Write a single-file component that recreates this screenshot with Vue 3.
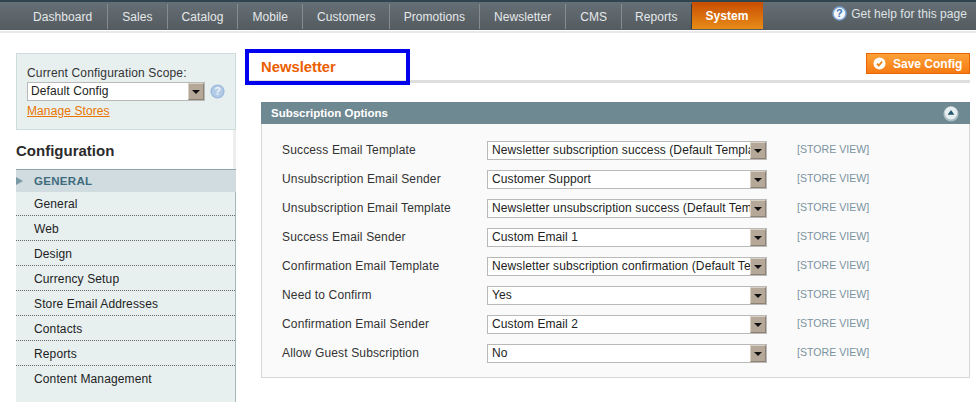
<script setup>
const nav = ['Dashboard','Sales','Catalog','Mobile','Customers','Promotions','Newsletter','CMS','Reports'];
const menu = ['General','Web','Design','Currency Setup','Store Email Addresses','Contacts','Reports','Content Management'];
const rows = [
  ['Success Email Template','Newsletter subscription success (Default Templa'],
  ['Unsubscription Email Sender','Customer Support'],
  ['Unsubscription Email Template','Newsletter unsubscription success (Default Tem'],
  ['Success Email Sender','Custom Email 1'],
  ['Confirmation Email Template','Newsletter subscription confirmation (Default Te'],
  ['Need to Confirm','Yes'],
  ['Confirmation Email Sender','Custom Email 2'],
  ['Allow Guest Subscription','No'],
];
</script>

<template>
  <div class="page">
    <header class="nav">
      <ul class="tabs">
        <li v-for="n in nav" :key="n" class="tab">{{ n }}</li>
        <li class="tab active">System</li>
      </ul>
      <div class="help">
        <svg width="15" height="15" viewBox="0 0 15 15"><circle cx="7.5" cy="7.5" r="6.4" fill="#f4f8fc" stroke="#82aad8" stroke-width="1.5"/><text x="7.5" y="11.4" text-anchor="middle" class="q">?</text></svg>
        <span>Get help for this page</span>
      </div>
    </header>
    <div class="strip"></div>
    <div class="body">
      <aside class="side">
        <div class="scope">
          <div class="scope-label">Current Configuration Scope:</div>
          <div class="scope-row">
            <div class="select scope-select">
              <span class="val">Default Config</span>
              <span class="arrow"><i></i></span>
            </div>
            <svg class="qm" width="15" height="15" viewBox="0 0 15 15"><circle cx="7.5" cy="7.5" r="6.4" fill="#b4cbe6" stroke="#9dbbdf" stroke-width="1.4"/><text x="7.5" y="11.4" text-anchor="middle" class="q2">?</text></svg>
          </div>
          <a class="manage">Manage Stores</a>
        </div>
        <h3 class="conf">Configuration</h3>
        <div class="menu">
          <div class="group"><span class="tri"></span>GENERAL</div>
          <div v-for="(m,i) in menu" :key="m" class="item" :class="{ first: i === 0, last: i === menu.length - 1 }">{{ m }}</div>
        </div>
      </aside>
      <main class="main">
        <div class="head">
          <h3 class="title">Newsletter</h3>
          <button class="save">
            <svg width="13" height="13" viewBox="0 0 14 14"><circle cx="7" cy="7" r="6.5" fill="#fff"/><path d="M4.2 7.2l2 2 3.6-4.2" fill="none" stroke="#f07f12" stroke-width="1.8"/></svg>
            <span>Save Config</span>
          </button>
          <div class="outline"></div>
        </div>
        <section class="section">
          <div class="sec-head">
            <span>Subscription Options</span>
            <svg width="16" height="17" viewBox="0 0 16 17"><circle cx="8" cy="8.8" r="7.6" fill="#a9bcc2"/><circle cx="8" cy="8" r="6.4" fill="#e6eef0"/><path d="M8 5l3.4 4.8H4.6z" fill="#23566e"/></svg>
          </div>
          <div class="fields">
            <div v-for="r in rows" :key="r[0]" class="row">
              <label class="lab">{{ r[0] }}</label>
              <div class="select">
                <span class="val">{{ r[1] }}</span>
                <span class="arrow"><i></i></span>
              </div>
              <span class="sv">[STORE VIEW]</span>
            </div>
          </div>
        </section>
      </main>
    </div>
  </div>
</template>

<style>
html, body { margin: 0; overflow: hidden; background: #fff; }
</style>

<style scoped>
.page { width: 976px; height: 402px; overflow: hidden; font: 12px "Liberation Sans", Arial, sans-serif; color: #2f2f2f; background: #fff; }
.nav { height: 28px; border-top: 2px solid #2e4550; background: linear-gradient(#666f75, #535b60); display: flex; justify-content: space-between; }
.tabs { list-style: none; margin: 0; padding: 0 0 0 19px; display: flex; height: 27px; }
.tab { padding: 0 14px; color: #e6e9ea; font-size: 12px; border-right: 1px solid #858c90; letter-spacing: .06px; height: 25px; margin-top: 2px; line-height: 27px; }
.tab:first-child { padding-right: 15px; }
.tab:nth-child(5) { padding-right: 13px; }
.tab:nth-child(9) { border-right: 1px solid #2e3a40; padding-right: 13px; padding-left: 13px; }
.tab.active { border: 0; margin-top: 0; height: 27px; line-height: 29px; width: 71px; box-sizing: border-box; text-align: center; padding: 0; color: #fff; font-weight: bold; background: linear-gradient(#c84d02, #e88c17); }
.help { display: flex; align-items: center; gap: 4px; color: #dfe3e5; font-size: 12px; letter-spacing: .05px; padding-right: 9px; height: 27px; margin-top: -2px; }
.q { font: bold 11px "Liberation Sans", sans-serif; fill: #3b76b4; }
.q2 { font: bold 11px "Liberation Sans", sans-serif; fill: #eef4fa; }
.strip { height: 3px; background: #e9e9e9; border-top: 1px solid #fff; box-sizing: border-box; }
.body { display: flex; padding-left: 16px; }
.side { width: 220px; flex: none; margin-top: 20px; }
.scope { height: 77px; box-sizing: border-box; border: 1px solid #cddddd; background: #e7efef; padding: 12px 10px 0; }
.scope-label { font-size: 12px; line-height: 14px; color: #333; letter-spacing: .15px; }
.scope-row { display: flex; align-items: center; gap: 5px; margin-top: 2px; }
.scope-select { width: 182px; }
.scope-select .val { padding-left: 3px; }
.qm { flex: none; }
.manage { display: block; margin-top: 3px; color: #ea7601; text-decoration: underline; font-size: 12px; line-height: 15px; letter-spacing: .1px; }
.select { display: flex; height: 19px; box-sizing: border-box; width: 280px; border: 1px solid #b9b9b9; background: #fff; overflow: hidden; }
.val { flex: 1; min-width: 0; white-space: nowrap; overflow: hidden; padding-left: 4px; font-size: 12px; line-height: 17px; color: #222; letter-spacing: .1px; }
.arrow { flex: none; width: 16px; background: #b5a898; border-left: 1px solid #d8d0c3; border-top: 1px solid #d8d0c3; border-right: 1px solid #8d8271; border-bottom: 1px solid #8d8271; box-sizing: border-box; display: flex; align-items: center; justify-content: center; }
.arrow i { width: 0; height: 0; border: 4px solid transparent; border-top: 4px solid #111; border-bottom: 0; }
.conf { margin: 0; height: 39px; font-size: 15px; line-height: 42px; font-weight: bold; color: #2b2b2b; border-right: 3px solid #eee; box-sizing: border-box; }
.menu { background: #e7efef; border-right: 1px solid #a9b8bb; height: 250px; }
.group { height: 23px; margin-right: -1px; box-sizing: border-box; border-top: 1px solid #8ea5ac; background: #d0dcdf; color: #3f6b7e; font-weight: bold; font-size: 11.5px; line-height: 22px; padding-left: 18px; position: relative; letter-spacing: .3px; }
.tri { position: absolute; left: 0; top: 7px; width: 0; height: 0; border: 4px solid transparent; border-left: 7px solid #7a9aa8; border-right: 0; }
.item { height: 25px; box-sizing: border-box; border-bottom: 1px dotted #666; line-height: 27px; padding-left: 18px; font-size: 12px; color: #222; letter-spacing: .13px; }
.item.first { height: 24px; line-height: 24px; }
.item.last { border-bottom: 0; }
.main { flex: 1; padding: 0 6px 0 10px; min-width: 0; }
.head { margin-top: 17px; border-bottom: 3px solid #dedede; position: relative; display: flex; justify-content: space-between; height: 30px; }
.title { margin: 0 0 0 15px; padding-top: 8px; font-size: 14.8px; line-height: 18px; color: #eb5e00; font-weight: bold; }
.outline { position: absolute; left: -1px; top: -1px; width: 165px; height: 36px; box-sizing: border-box; border: 4px solid #0000ee; pointer-events: none; }
.save { margin-top: 3px; width: 104px; height: 21px; box-sizing: border-box; border: 1px solid #ed6502; background: linear-gradient(#fda13a, #f67a12); color: #fff; font: bold 12px "Liberation Sans", sans-serif; display: flex; align-items: center; gap: 7px; padding: 0 0 0 6px; }
.section { margin: 19px 0 0 15px; }
.sec-head { height: 22px; background: #6f8992; color: #fff; font-weight: bold; font-size: 11.5px; display: flex; justify-content: space-between; align-items: center; padding: 0 11px 0 10px; }
.fields { height: 254px; box-sizing: border-box; border: 1px solid #d6d6d6; border-top: 0; background: #fafafa; padding: 17px 0 0 20px; }
.row { display: flex; height: 29px; align-items: flex-start; }
.lab { width: 205px; flex: none; font-size: 12px; line-height: 19px; color: #333; letter-spacing: .15px; }
.sv { margin-left: 30px; color: #7a93a0; font-size: 10.6px; line-height: 17px; }
</style>
